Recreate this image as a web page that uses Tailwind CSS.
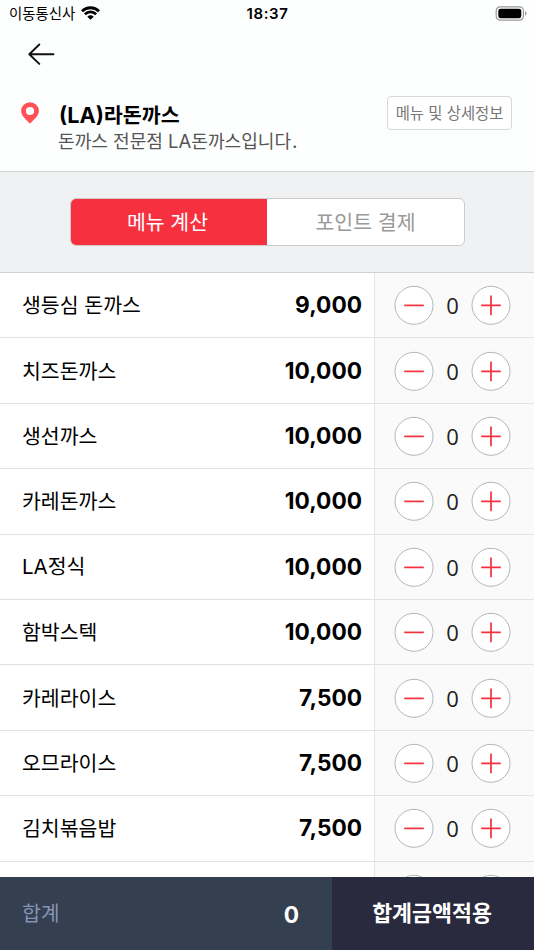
<!DOCTYPE html>
<html lang="ko">
<head>
<meta charset="utf-8">
<title>(LA)라돈까스</title>
<script src="https://cdn.jsdelivr.net/npm/@tailwindcss/browser@4"></script>
</head>
<body class="w-[534px] h-[950px] overflow-hidden bg-white font-['Noto_Sans_CJK_KR',sans-serif] text-black">
<div class="flex flex-col h-[950px]">
  <header class="h-[172px] shrink-0 border-b border-[#cdd2d3] bg-[#fdfefe]">
    <div class="h-[28px] flex items-center justify-between pl-[9px] pr-[7px]">
      <div class="flex items-center w-[200px] gap-[6px]">
        <span class="text-[14.4px] leading-[20px] whitespace-nowrap -mt-[2px]">이동통신사</span>
        <svg class="w-[19px] h-[14px] -mt-[2px]" viewBox="0 0 19 14"><path d="M9.500 13.800 6.300 10.700a4.500 4.500 0 0 1 6.400 0Z"/><path d="M3.900 8.200a8 8 0 0 1 11.200 0M1 5.200a12.200 12.200 0 0 1 17 0" fill="none" stroke="#000" stroke-width="2.800"/></svg>
      </div>
      <span class="font-['Inter',sans-serif] font-semibold text-[15px] leading-[20px] tracking-[0.600px] -ml-[1px]">18:37</span>
      <div class="flex items-center justify-end w-[200px]">
        <svg class="w-[32px] h-[15px] -mt-[2px]" viewBox="0 0 32 15"><rect x="1.200" y=".8" width="27.200" height="13.400" rx="4" fill="#fff" stroke="#999" stroke-width="1.200"/><rect x="3.300" y="2.700" width="23" height="9.600" rx="2.300"/><path d="M30 5.300q1.500.6 1.500 2.200t-1.500 2.200Z" fill="#999"/></svg>
      </div>
    </div>
    <div class="h-[52px] pl-[28px] flex items-center">
      <svg class="w-[27px] h-[22px]" viewBox="0 0 27 22" fill="none" stroke="#111" stroke-width="1.900" stroke-linecap="round" stroke-linejoin="round"><path d="M25.500 11.300H1.300M11.300 1.500 1.300 11.300l10 9.600"/></svg>
    </div>
    <div class="flex pl-[21px] pr-[22px] pt-[16px]">
      <svg class="w-[18px] h-[22px] mt-[6px] shrink-0" viewBox="0 0 18 22"><path fill="#ff5058" fill-rule="evenodd" d="M9 .2a8.9 8.9 0 0 1 8.9 8.9C17.900 14 12.500 18 9 21.700 5.500 18 .1 14 .1 9.100A8.900 8.900 0 0 1 9 .2Zm0 4.700a4.100 4.100 0 1 0 0 8.200 4.100 4.100 0 0 0 0-8.200Z"/></svg>
      <div class="ml-[19px] pt-[6px] grow">
        <h1 class="pl-px text-[20.600px] leading-[25px] font-bold whitespace-nowrap"><span class="font-['Inter',sans-serif] text-[21.700px]">(LA)</span>라돈까스</h1>
        <p class="text-[18.100px] leading-[24px] text-[#555] whitespace-nowrap">돈까스 전문점 <span class="font-['Inter',sans-serif] text-[18.500px]">LA</span>돈까스입니다<span class="pl-px">.</span></p>
      </div>
      <button class="w-[125px] h-[34px] shrink-0 rounded-[4px] border border-[#d5dadb] bg-white text-[15.400px] leading-[30px] pb-[2px] text-[#777] whitespace-nowrap">메뉴 및 상세정보</button>
    </div>
  </header>
  <nav class="h-[101px] shrink-0 border-b border-[#cdd2d3] bg-[#f0f1f3] flex justify-center items-center">
    <div class="w-[395px] h-[48px] ml-px flex rounded-[6px] border border-[#ccc] overflow-hidden bg-white text-[20.500px] leading-[44px] text-center">
      <div class="w-[196px] bg-[#f7303f] text-white pr-[3px]">메뉴 계산</div>
      <div class="grow text-[#999]">포인트 결제</div>
    </div>
  </nav>
  <main id="menu" class="h-[604px] overflow-hidden"></main>
  <footer class="h-[73px] shrink-0 flex text-white">
    <div class="w-[332px] bg-[#343f50] flex items-center justify-between pl-[22px] pr-[33px]">
      <span class="text-[20.500px] leading-[30px] text-[#8594b5] -mt-[3px]">합계</span>
      <span class="text-[22.700px] leading-[30px] font-bold font-['Inter',sans-serif] mt-[2px]">0</span>
    </div>
    <div class="grow bg-[#292a3d] flex items-center justify-center text-[21.700px] leading-[30px] font-bold pb-[3px] pr-[2px]">합계금액적용</div>
  </footer>
</div>
<script>
const items = [['생등심 돈까스','9,000'],['치즈돈까스','10,000'],['생선까스','10,000'],['카레돈까스','10,000'],['<span class="font-[\'Inter\',sans-serif] text-[20.500px]">LA</span>정식','10,000'],['함박스텍','10,000'],['카레라이스','7,500'],['오므라이스','7,500'],['김치볶음밥','7,500'],null];
const circle = d => `<svg class="w-[40px] h-[40px]" viewBox="0 0 40 40" fill="none"><circle cx="20" cy="20.300" r="19" fill="#fff" stroke="#b3b7b9" stroke-width="1"/><path d="${d}" stroke="#f7303f" stroke-width="1.700"/></svg>`;
document.getElementById('menu').innerHTML = items.map(item => `
<div class="h-[65.4px] flex border-b border-[#dfe2e3]">
  <div class="w-[374px] flex items-center justify-between pl-[22px] pr-[12px]">
    ${item ? `<span class="text-[20.500px] leading-[30px] -mt-[2px]">${item[0]}</span>
    <span class="text-[22.700px] leading-[30px] font-bold font-['Inter',sans-serif]">${item[1]}</span>` : ''}
  </div>
  <div class="w-[160px] flex items-center border-l border-[#e6e6e6] bg-[#fafafa] pl-[19px]">
    ${circle('M10.200 20.400H29.800')}
    <span class="w-[37px] text-center text-[22px] leading-[30px] text-[#222] font-['Open_Sans','Noto_Sans',sans-serif]">${item ? '0' : ''}</span>
    ${circle('M10.200 20.400H29.800M20 10.600V30.200')}
  </div>
</div>`).join('');
</script>
</body>
</html>
